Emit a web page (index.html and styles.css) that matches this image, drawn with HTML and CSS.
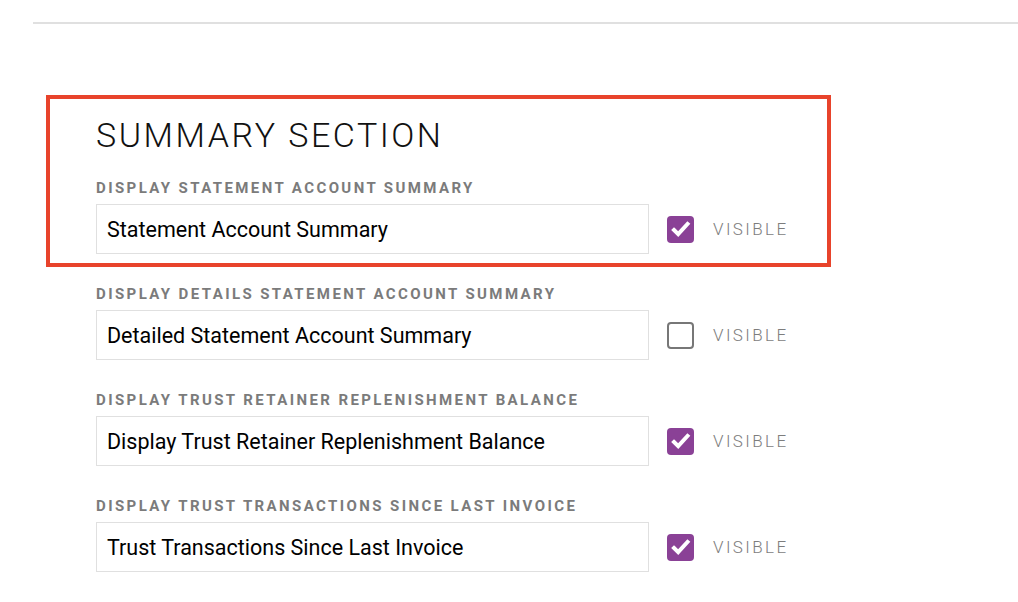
FILE: index.html
```html
<!DOCTYPE html>
<html>
<head>
<meta charset="utf-8">
<link rel="stylesheet" href="styles.css">
</head>
<body>
<div class="topline"></div>
<div class="wrap">
  <section class="highlight">
    <h2 class="title">SUMMARY SECTION</h2>
    <div class="field">
      <div class="label">DISPLAY STATEMENT ACCOUNT SUMMARY</div>
      <div class="row">
        <div class="input">Statement Account Summary</div>
        <span class="check on"><svg viewBox="0 0 27 27" width="27" height="27"><path d="M7 14 L11.2 18.2 L20.5 8" fill="none" stroke="#fff" stroke-width="4" stroke-linecap="square"/></svg></span>
        <span class="vis">VISIBLE</span>
      </div>
    </div>
  </section>
  <div class="fields">
    <div class="field">
      <div class="label">DISPLAY DETAILS STATEMENT ACCOUNT SUMMARY</div>
      <div class="row">
        <div class="input">Detailed Statement Account Summary</div>
        <span class="check off"></span>
        <span class="vis">VISIBLE</span>
      </div>
    </div>
    <div class="field">
      <div class="label">DISPLAY TRUST RETAINER REPLENISHMENT BALANCE</div>
      <div class="row">
        <div class="input">Display Trust Retainer Replenishment Balance</div>
        <span class="check on"><svg viewBox="0 0 27 27" width="27" height="27"><path d="M7 14 L11.2 18.2 L20.5 8" fill="none" stroke="#fff" stroke-width="4" stroke-linecap="square"/></svg></span>
        <span class="vis">VISIBLE</span>
      </div>
    </div>
    <div class="field">
      <div class="label">DISPLAY TRUST TRANSACTIONS SINCE LAST INVOICE</div>
      <div class="row">
        <div class="input">Trust Transactions Since Last Invoice</div>
        <span class="check on"><svg viewBox="0 0 27 27" width="27" height="27"><path d="M7 14 L11.2 18.2 L20.5 8" fill="none" stroke="#fff" stroke-width="4" stroke-linecap="square"/></svg></span>
        <span class="vis">VISIBLE</span>
      </div>
    </div>
  </div>
</div>
</body>
</html>
```
FILE: styles.css
```css
html, body {
  margin: 0;
  padding: 0;
  background: #fff;
  font-family: Roboto, "Liberation Sans", sans-serif;
  color: #000;
}
.topline {
  margin: 22px 0 0 33px;
  height: 2px;
  background: #e0e0e0;
}
.wrap {
  margin: 71px 0 0 46px;
  width: 785px;
}
.highlight {
  border: 4px solid #e8432b;
  padding: 16px 0 9px 46px;
}
.title {
  margin: 0 0 22px;
  font-size: 34px;
  line-height: 40px;
  font-weight: 300;
  letter-spacing: 2.5px;
  color: #111;
}
.fields {
  padding: 16px 0 0 50px;
}
.fields .field {
  margin-bottom: 29px;
}
.label {
  font-size: 15px;
  line-height: 20px;
  padding-top: 1px;
  font-weight: 700;
  letter-spacing: 2.4px;
  color: #7b7b7b;
  margin-bottom: 6px;
}
.row {
  display: flex;
  align-items: center;
}
.input {
  box-sizing: border-box;
  flex: 0 0 553px;
  width: 553px;
  height: 50px;
  border: 1px solid #e0e0e0;
  padding: 1px 10px 0;
  font-size: 21.5px;
  line-height: 48px;
  color: #000;
}
.check {
  box-sizing: border-box;
  flex: 0 0 27px;
  width: 27px;
  height: 27px;
  margin-left: 18px;
  border-radius: 4px;
  display: block;
}
.check svg { display: block; }
.check.on { background: #8a4196; }
.check.off { border: 2px solid #777; background: #fff; }
.vis {
  margin-left: 19px;
  font-size: 17px;
  font-weight: 300;
  letter-spacing: 2.4px;
  color: #7d7d7d;
}
```
